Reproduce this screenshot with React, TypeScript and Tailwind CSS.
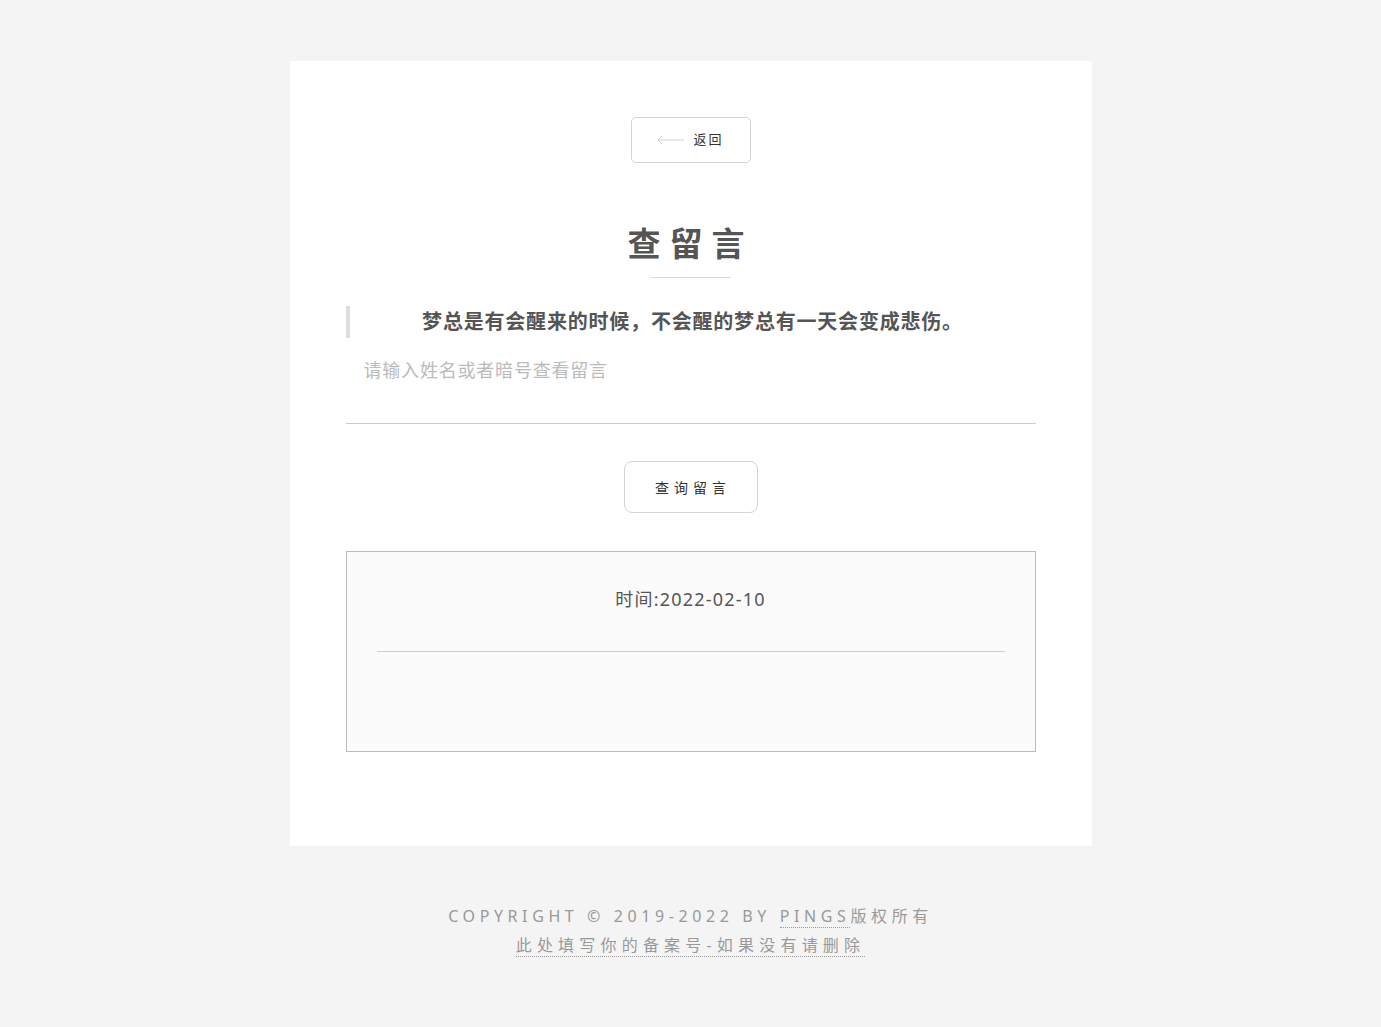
export default function App() {
  const font = {fontFamily: '"Noto Sans", "Noto Sans CJK SC", sans-serif'};
  return (
    <div className="min-h-[1027px] bg-[#f4f4f4] pt-[61px] pb-[60px]" style={font}>
      {/* card */}
      <div className="mx-auto w-[802px] bg-white px-[56px] pt-[56px] pb-[94px]">
        <div className="flex justify-center">
          <button className="flex h-[46px] w-[120px] items-center justify-center gap-[8px] rounded-[5px] border border-[#d4d4d4] bg-white text-[13px] text-[#333]">
            <svg width="28" height="10" viewBox="0 0 28 10" fill="none" stroke="#d0d0d0" strokeWidth="1">
              <path d="M27 5H1M5 1L1 5l4 4" />
            </svg>
            <span className="tracking-[2px]">返回</span>
          </button>
        </div>

        <div className="mt-[57px] flex flex-col items-center">
          <h1 className="text-[33px] font-bold leading-[48px] tracking-[9px] text-[#555]">查留言</h1>
          <div className="mt-[9px] h-px w-[80px] bg-[#d8d8d8]" />
        </div>

        <blockquote className="mt-[28px] border-l-4 border-[#ddd] py-[4px] text-center text-[20px] font-bold leading-[24px] tracking-[0.8px] text-[#555]">
          梦总是有会醒来的时候，不会醒的梦总有一天会变成悲伤。
        </blockquote>

        <div className="mt-[17px] border-b border-[#ccc] pb-[38px] pl-[18px] text-[18px] leading-[30px] tracking-[0.8px] text-[#bbb]">
          请输入姓名或者暗号查看留言
        </div>

        <div className="mt-[37px] flex justify-center">
          <button className="h-[52px] w-[134px] rounded-[8px] border border-[#d4d4d4] bg-white pl-[5px] text-[14px] tracking-[5px] text-[#333]">
            查询留言
          </button>
        </div>

        <div className="mt-[38px] h-[201px] border border-[#bbb] bg-[#fbfbfb] px-[30px] pt-[33px]">
          <p className="text-center text-[18px] leading-[28px] tracking-[1.2px] text-[#555]">时间:2022-02-10</p>
          <div className="mt-[38px] h-px bg-[#ccc]" />
        </div>
      </div>

      {/* footer */}
      <footer className="mt-[56px] text-center text-[16px] leading-[29px] text-[#999]">
        <p className="tracking-[4.6px]">
          COPYRIGHT © 2019-2022 BY{" "}
          <a className="border-b border-dotted border-[#999]">PINGS</a>
          版权所有
        </p>
        <p className="tracking-[5.2px]">
          <a className="border-b border-dotted border-[#999]">此处填写你的备案号-如果没有请删除</a>
        </p>
      </footer>
    </div>
  );
}
